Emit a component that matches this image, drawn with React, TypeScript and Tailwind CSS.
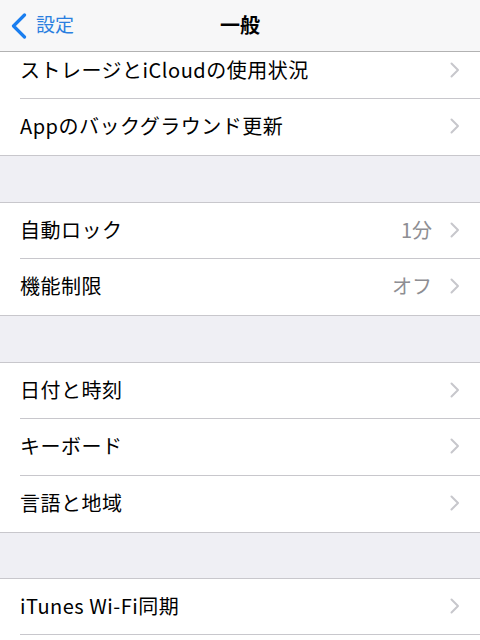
import React from 'react';

type Item = { label: string; value?: string };

const groups: Item[][] = [
  [{ label: 'ストレージとiCloudの使用状況' }, { label: 'Appのバックグラウンド更新' }],
  [
    { label: '自動ロック', value: '1分' },
    { label: '機能制限', value: 'オフ' },
  ],
  [{ label: '日付と時刻' }, { label: 'キーボード' }, { label: '言語と地域' }],
  [{ label: 'iTunes Wi-Fi同期' }],
];

const gaps = ['', 'mt-[46px]', 'mt-[46px]', 'mt-[45px]'];

function Chevron() {
  return (
    <svg width="10" height="16" viewBox="0 0 10 16" className="shrink-0">
      <path d="M1.5 1.5 L8 8 L1.5 14.5" fill="none" stroke="#c7c7cc" strokeWidth="2" strokeLinecap="round" strokeLinejoin="round" />
    </svg>
  );
}

function Row({ item, height, last, shift }: { item: Item; height: string; last: boolean; shift?: boolean }) {
  return (
    <div className={`flex pl-5 ${height}`}>
      <div
        className={`flex-1 h-full flex items-center pr-5 ${shift ? 'pb-[10px]' : 'pb-[2px]'} ${last ? '' : 'border-b border-[#c8c7cc]'}`}
      >
        <span className="flex-1 text-[20px] text-black tracking-[0.5px]">{item.label}</span>
        {item.value && <span className="text-[20px] text-[#8e8e93] mr-[18px]">{item.value}</span>}
        <Chevron />
      </div>
    </div>
  );
}

export default function App() {
  return (
    <div
      className="w-[480px] h-[640px] overflow-hidden bg-[#efeff4] flex flex-col"
      style={{ fontFamily: '"Noto Sans CJK JP", "Liberation Sans", sans-serif' }}
    >
      <header className="h-[52px] shrink-0 bg-[#f7f7f8] border-b border-[#b2b2b2] flex items-center relative">
        <div className="flex items-center pl-[11px] gap-[9px]">
          <svg width="16" height="26" viewBox="0 0 16 26">
            <path d="M13.5 2 L2.5 13 L13.5 24" fill="none" stroke="#1a7ef0" strokeWidth="3.2" strokeLinecap="round" strokeLinejoin="round" />
          </svg>
          <span className="text-[19px] text-[#2b7fe0] -mt-[2px]">設定</span>
        </div>
        <h1 className="absolute left-0 right-0 text-center text-[20px] font-bold text-black -mt-[2px] pointer-events-none">
          一般
        </h1>
      </header>

      {groups.map((g, gi) => {
        const open = gi === groups.length - 1;
        return (
          <div
            key={gi}
            className={`bg-white shrink-0 ${gi === 0 ? '' : `${gaps[gi]} border-t border-[#c8c7cc]`} ${open ? 'flex-1' : 'border-b border-[#c8c7cc]'}`}
          >
            {g.map((item, i) => {
              const last = i === g.length - 1 && !open;
              let height = 'h-[57px]';
              if (gi === 0 && i === 0) height = 'h-[47px]';
              else if (i === 0 || last) height = 'h-[56px]';
              return (
                <Row
                  key={item.label}
                  item={item}
                  height={height}
                  shift={gi === 0 && i === 0}
                  last={last}
                />
              );
            })}
          </div>
        );
      })}
    </div>
  );
}
